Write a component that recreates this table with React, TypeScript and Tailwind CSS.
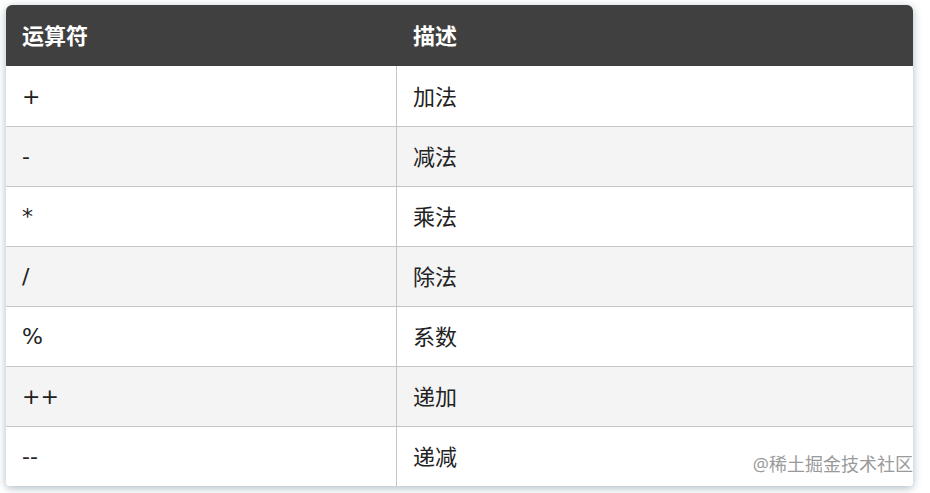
const ROWS = [
  ['+', '加法'],
  ['-', '减法'],
  ['*', '乘法'],
  ['/', '除法'],
  ['%', '系数'],
  ['++', '递加'],
  ['--', '递减'],
]

export default function App() {
  return (
    <div
      className="w-[930px] h-[493px] bg-white pt-[5px] pl-[6px] overflow-hidden"
      style={{ fontFamily: '"Open Sans", "Noto Sans CJK SC", sans-serif' }}
    >
      <div className="relative w-[907px] rounded-t-[6px] rounded-b-[4px] bg-white shadow-[0_2px_9px_rgba(70,100,120,0.45)] overflow-hidden">
        <div className="flex h-[61px] items-center bg-[#404040] text-white text-[22px] font-bold">
          <div className="w-[391px] pl-4">运算符</div>
          <div className="flex-1 pl-4">描述</div>
        </div>
        {ROWS.map(([op, desc], i) => (
          <div
            key={op}
            className={`flex h-[60px] text-[22px] text-[#222] ${i > 0 ? 'border-t border-[#c6c6c6]' : ''} ${
              i % 2 === 1 ? 'bg-[#f4f4f4]' : 'bg-white'
            }`}
          >
            <div
              className="w-[391px] pl-4 flex items-center border-r border-[#c6c6c6] font-['DejaVu_Sans',sans-serif]"
            >
              {op}
            </div>
            <div className="flex-1 pl-4 flex items-center">{desc}</div>
          </div>
        ))}
        <div className="absolute right-0 bottom-[13px] text-[18px] text-[#9a9a9a] leading-none">@稀土掘金技术社区</div>
      </div>
    </div>
  )
}
